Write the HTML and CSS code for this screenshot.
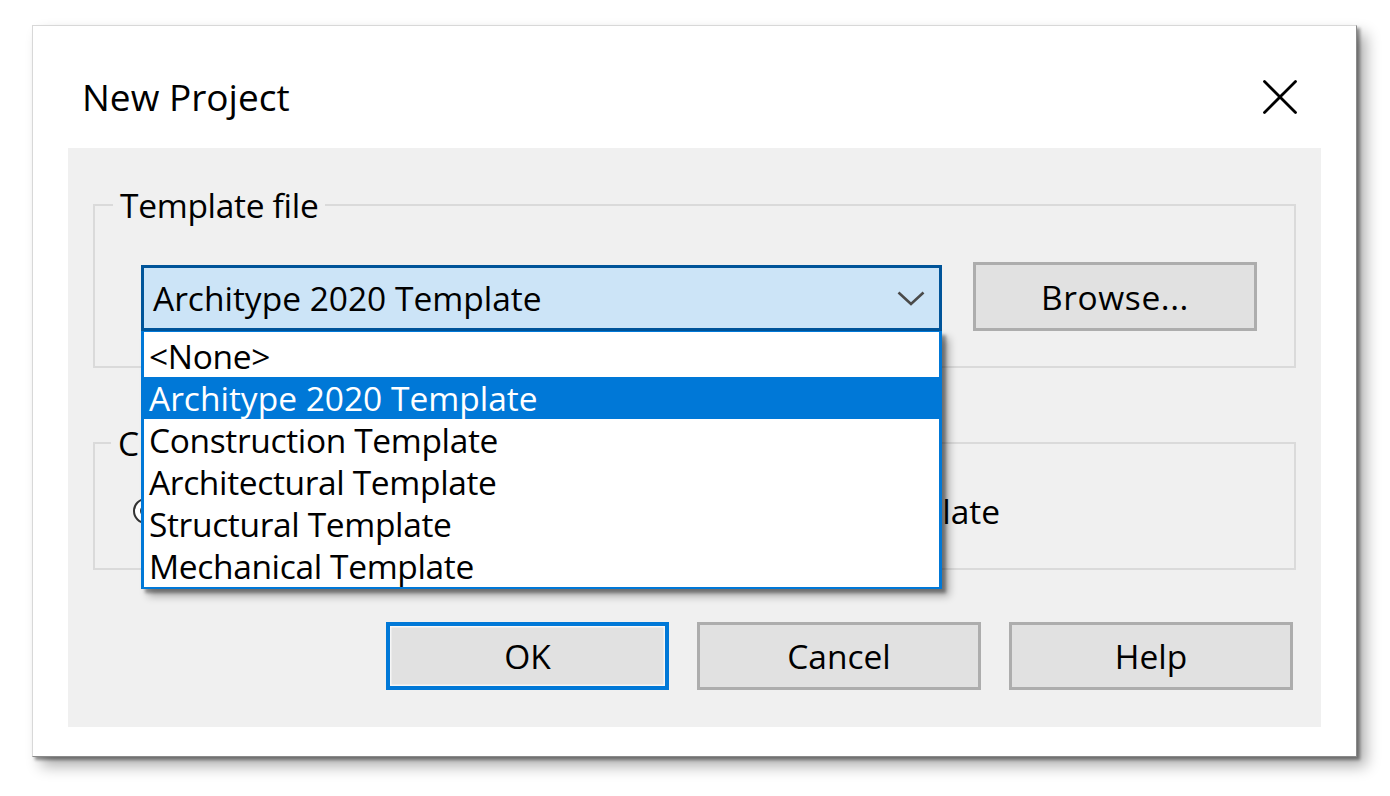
FILE: index.html
```html
<!DOCTYPE html>
<html lang="en">
<head>
<meta charset="utf-8">
<title>New Project</title>
<link rel="stylesheet" href="styles.css">
</head>
<body>
<div class="dialog">
  <div class="titlebar">
    <span class="title">New Project</span>
    <svg class="close-icon" width="34" height="34" viewBox="0 0 34 34" aria-label="Close">
      <line x1="1.5" y1="1.5" x2="32.5" y2="32.5"/>
      <line x1="32.5" y1="1.5" x2="1.5" y2="32.5"/>
    </svg>
  </div>
  <div class="panel">
    <fieldset class="group">
      <legend class="group-label">Template file</legend>
      <div class="group-body template-row">
        <div class="combo-wrap">
          <div class="combo">
            <span class="combo-value">Architype 2020 Template</span>
            <svg class="chevron" width="28" height="15" viewBox="0 0 28 15">
              <polyline points="1.5,1.5 14,13 26.5,1.5"/>
            </svg>
          </div>
          <ul class="combo-list">
            <li class="combo-item">&lt;None&gt;</li>
            <li class="combo-item selected">Architype 2020 Template</li>
            <li class="combo-item">Construction Template</li>
            <li class="combo-item">Architectural Template</li>
            <li class="combo-item">Structural Template</li>
            <li class="combo-item">Mechanical Template</li>
          </ul>
        </div>
        <button class="btn btn-browse">Browse...</button>
      </div>
    </fieldset>
    <fieldset class="group group-create">
      <legend class="group-label label-create">Create new</legend>
      <div class="group-body radio-row">
        <label class="radio radio-project"><span class="radio-dot checked"></span>Project</label>
        <label class="radio"><span class="radio-dot"></span>Project template</label>
      </div>
    </fieldset>
    <div class="actions">
      <button class="btn btn-default">OK</button>
      <button class="btn">Cancel</button>
      <button class="btn">Help</button>
    </div>
  </div>
</div>
</body>
</html>
```

FILE: styles.css
```css
* {
  box-sizing: border-box;
}

html, body {
  margin: 0;
  padding: 0;
  background: #ffffff;
}

body {
  width: 1390px;
  height: 796px;
  overflow: hidden;
  font-family: "Open Sans", "Noto Sans", sans-serif;
  font-size: 33.5px;
  color: #000;
  padding: 25px 0 0 32px;
}

.dialog {
  width: 1325px;
  height: 732px;
  background: #fff;
  border: 1px solid #d8d8d8;
  border-right-color: #8a8a8a;
  border-bottom-color: #8a8a8a;
  box-shadow: 3px 3px 3px rgba(0, 0, 0, 0.4), 9px 9px 14px rgba(0, 0, 0, 0.32);
}

.titlebar {
  height: 122px;
  padding: 20px 59px 0 49px;
  display: flex;
  align-items: center;
  justify-content: space-between;
}

.title {
  font-size: 37px;
  line-height: 44px;
}

.close-icon line {
  stroke: #000;
  stroke-width: 2.8;
  stroke-linecap: round;
}

.panel {
  margin: 0 35px;
  height: 579px;
  background: #f0f0f0;
  padding: 37px 25px 0 25px;
}

.group {
  margin: 0;
  padding: 0;
  min-width: 0;
  border: 2px solid #dadada;
}

.group-label {
  margin-left: 18px;
  padding: 0 7px;
  line-height: 40px;
  letter-spacing: -0.3px;
}

.label-create {
  margin-left: 16px;
}

.template-row {
  display: flex;
  align-items: flex-end;
  gap: 31px;
  padding: 37px 37px 35px 46px;
}

.combo-wrap {
  position: relative;
  width: 801px;
  flex: none;
}

.combo {
  height: 66px;
  border: 3px solid #005499;
  background: #cce4f7;
  display: flex;
  align-items: center;
  padding: 0 14px 0 9px;
}

.combo-value {
  flex: 1;
  line-height: 40px;
  white-space: nowrap;
}

.chevron polyline {
  fill: none;
  stroke: #4a4a4a;
  stroke-width: 2.6;
}

.combo-list {
  position: absolute;
  top: 100%;
  left: 0;
  width: 100%;
  margin: 0;
  padding: 3px 0 0 0;
  list-style: none;
  background: #fff;
  border: 3px solid #0078d7;
  border-top-width: 1px;
  border-bottom-width: 2px;
  box-shadow: 4px 4px 3px rgba(0, 0, 0, 0.35), 7px 7px 8px rgba(0, 0, 0, 0.3);
  z-index: 10;
}

.combo-item {
  height: 42px;
  line-height: 42px;
  padding-left: 5px;
  white-space: nowrap;
  letter-spacing: -0.35px;
}

.combo-item.selected {
  background: #0078d7;
  color: #fff;
  letter-spacing: 0;
}

.btn {
  font-family: inherit;
  font-size: inherit;
  color: #000;
  background: #e1e1e1;
  border: 3px solid #adadad;
  padding: 0;
  margin: 0;
  width: 284px;
  height: 68px;
  line-height: 40px;
  flex: none;
}

.btn-browse {
  height: 69px;
  letter-spacing: 0.6px;
}

.group-create {
  margin-top: 55px;
}

.radio-row {
  display: flex;
  align-items: center;
  padding: 28px 0 37px 38px;
  height: 105px;
}

.radio {
  display: flex;
  align-items: center;
  gap: 10px;
  line-height: 40px;
}

.radio-project {
  width: 573px;
}

.radio-dot {
  width: 26px;
  height: 26px;
  border: 2px solid #333;
  border-radius: 50%;
  background: #fff;
  display: inline-flex;
  align-items: center;
  justify-content: center;
}

.radio-dot.checked::after {
  content: "";
  width: 12px;
  height: 12px;
  border-radius: 50%;
  background: #333;
}

.actions {
  margin-top: 52px;
  margin-right: 3px;
  display: flex;
  justify-content: flex-end;
  gap: 28px;
}

.btn-default {
  width: 283px;
  border: 4px solid #0078d7;
  box-shadow: inset 0 0 0 1.5px #f6f6f6;
}
```
